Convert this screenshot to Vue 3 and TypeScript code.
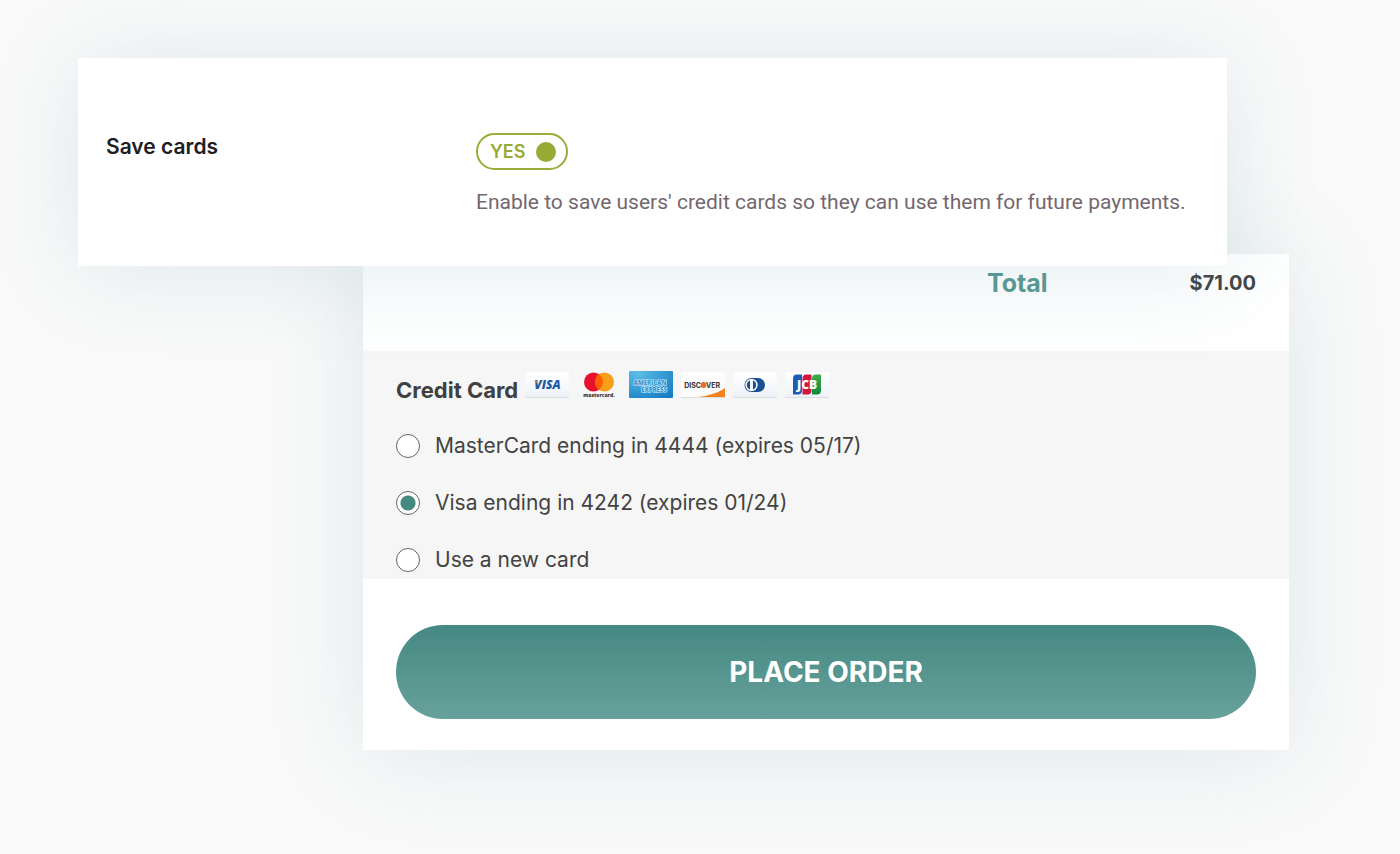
<script setup lang="ts">
import { ref } from 'vue'

interface PaymentOption {
  id: string
  label: string
}

const saveCards = ref(true)
const selected = ref('visa')

const options: PaymentOption[] = [
  { id: 'mastercard', label: 'MasterCard ending in 4444 (expires 05/17)' },
  { id: 'visa', label: 'Visa ending in 4242 (expires 01/24)' },
  { id: 'new', label: 'Use a new card' },
]
</script>

<template>
  <main class="stage">
    <section class="settings">
      <label class="settings-label" for="save-cards">Save cards</label>
      <div class="settings-field">
        <button
          id="save-cards"
          class="toggle"
          :class="{ off: !saveCards }"
          type="button"
          role="switch"
          :aria-checked="saveCards"
          aria-describedby="save-cards-hint"
          @click="saveCards = !saveCards"
        >
          <span>{{ saveCards ? 'YES' : 'NO' }}</span>
          <span class="knob"></span>
        </button>
        <p id="save-cards-hint" class="hint">
          Enable to save users' credit cards so they can use them for future payments.
        </p>
      </div>
    </section>

    <form class="order" @submit.prevent>
      <dl class="total">
        <dt>Total</dt>
        <dd>$71.00</dd>
      </dl>

      <fieldset class="payment">
        <div class="payment-head">
          <h2 id="payment-title">Credit Card</h2>
          <div class="brands">
            <svg class="brand" viewBox="0 0 44 28" role="img" aria-label="Visa">
              <defs>
                <linearGradient id="paper" x1="0" y1="0" x2="0" y2="1">
                  <stop offset="0" stop-color="#ffffff" />
                  <stop offset="1" stop-color="#eef2f8" />
                </linearGradient>
              </defs>
              <rect width="44" height="26" y="1" rx="1" fill="#d9dce1" />
              <rect width="44" height="25" y="1" rx="1" fill="url(#paper)" />
              <text x="22.500" y="18" text-anchor="middle" class="visa">VISA</text>
              <path d="M9 10h3.400l1.300 4.200C12.800 12 11.300 10.800 9 10z" fill="#f0a030" />
            </svg>
            <svg class="brand" viewBox="0 0 44 28" role="img" aria-label="Mastercard">
              <circle cx="16.500" cy="11" r="9.500" fill="#e8112d" />
              <circle cx="27.500" cy="11" r="9.500" fill="#f79e1b" />
              <path d="M22 3.300a9.500 9.500 0 0 1 0 15.400a9.500 9.500 0 0 1 0-15.400z" fill="#ff5f00" />
              <text x="22" y="25.500" text-anchor="middle" class="mc">mastercard.</text>
            </svg>
            <svg class="brand" viewBox="0 0 44 28" role="img" aria-label="American Express">
              <defs>
                <radialGradient id="amex" cx="0.2" cy="0.1" r="1.1">
                  <stop offset="0" stop-color="#5cbde6" />
                  <stop offset="1" stop-color="#167cc4" />
                </radialGradient>
              </defs>
              <rect width="44" height="27" rx="1" fill="url(#amex)" />
              <text x="21" y="13.500" text-anchor="middle" class="amex">AMERICAN</text>
              <text x="25" y="20.500" text-anchor="middle" class="amex">EXPRESS</text>
            </svg>
            <svg class="brand" viewBox="0 0 44 28" role="img" aria-label="Discover">
              <rect width="44" height="26" y="1" rx="1" fill="#dedede" />
              <rect width="44" height="25" y="1" rx="1" fill="#fdfdfd" />
              <path d="M44 17v9H17C28 24.500 37 22 44 17z" fill="#f58220" />
              <text x="20" y="16.500" text-anchor="end" class="discover">DISC</text>
              <circle cx="22.500" cy="14" r="2.900" fill="#f26a21" />
              <text x="25" y="16.500" class="discover">VER</text>
            </svg>
            <svg class="brand" viewBox="0 0 44 28" role="img" aria-label="Diners Club">
              <rect width="44" height="26" y="1" rx="1" fill="#d9dce1" />
              <rect width="44" height="25" y="1" rx="1" fill="url(#paper)" />
              <path d="M18 7h7a7 7 0 0 1 0 14h-7z" fill="#1b4f93" />
              <circle cx="18.500" cy="14" r="7" fill="#1b4f93" />
              <circle cx="18.500" cy="14" r="6.200" fill="#f7f9fc" />
              <path d="M17 9.500a4.800 4.800 0 0 0 0 9zM20 9.500a4.800 4.800 0 0 1 0 9z" fill="#1b4f93" />
            </svg>
            <svg class="brand" viewBox="0 0 44 28" role="img" aria-label="JCB">
              <defs>
                <linearGradient id="jcb-green" x1="0" y1="0" x2="0" y2="1">
                  <stop offset="0" stop-color="#3fae49" />
                  <stop offset="1" stop-color="#0b8a43" />
                </linearGradient>
              </defs>
              <rect width="44" height="26" y="1" rx="1" fill="#d9dce1" />
              <rect width="44" height="25" y="1" rx="1" fill="url(#paper)" />
              <path d="M12 3.500h5v16a4 4 0 0 1-4 4H8v-16a4 4 0 0 1 4-4z" fill="#1f5bb5" />
              <path d="M21.500 3.500h5v16a4 4 0 0 1-4 4h-5v-16a4 4 0 0 1 4-4z" fill="#d3173a" />
              <path d="M31 3.500h5v16a4 4 0 0 1-4 4h-5v-16a4 4 0 0 1 4-4z" fill="url(#jcb-green)" />
              <text x="22" y="17.500" text-anchor="middle" class="jcb">JCB</text>
            </svg>
          </div>
        </div>

        <div class="options" role="radiogroup" aria-labelledby="payment-title">
          <label v-for="option in options" :key="option.id" class="option">
            <input v-model="selected" type="radio" name="payment-card" :value="option.id" />
            <span>{{ option.label }}</span>
          </label>
        </div>
      </fieldset>

      <div class="actions">
        <button class="place-order" type="submit">PLACE ORDER</button>
      </div>
    </form>
  </main>
</template>

<style>
body {
  margin: 0;
  background: #fafafa;
}
</style>

<style scoped>
.stage {
  box-sizing: border-box;
  min-height: 100vh;
  padding: 58px 111px 104px 78px;
  overflow: hidden;
  background: #fafafa;
  color: #434343;
  font-family: Inter, "Liberation Sans", sans-serif;
}

.settings {
  position: relative;
  z-index: 1;
  box-sizing: border-box;
  display: grid;
  grid-template-columns: 370px 1fr;
  margin-right: 62px;
  padding: 75px 28px 50px;
  background: #fff;
  box-shadow: 0 4px 96px rgba(56, 120, 140, 0.15);
}

.settings-label {
  color: #1d2023;
  font-size: 21px;
  font-weight: 600;
  line-height: 28px;
}

.settings-field {
  display: flex;
  flex-direction: column;
  align-items: flex-start;
  gap: 18px;
}

.toggle {
  box-sizing: border-box;
  display: flex;
  align-items: center;
  justify-content: space-between;
  width: 92px;
  height: 37px;
  padding: 0 10px 0 12px;
  border: 2px solid #9aad38;
  border-radius: 19px;
  background: #fff;
  color: #97aa35;
  font-family: inherit;
  font-size: 18px;
  font-weight: 600;
  cursor: pointer;
}

.toggle.off {
  flex-direction: row-reverse;
  border-color: #a5a5a5;
  color: #8c8c8c;
}

.knob {
  width: 20px;
  height: 20px;
  border-radius: 50%;
  background: currentColor;
}

.hint {
  margin: 0;
  color: #74676e;
  font-family: Roboto, "Liberation Sans", sans-serif;
  font-size: 21px;
  line-height: 28px;
}

.order {
  margin: -12px 0 0 285px;
  background: #fff;
  box-shadow: 0 4px 96px rgba(56, 120, 140, 0.15);
}

.total {
  box-sizing: border-box;
  display: flex;
  justify-content: flex-end;
  align-items: center;
  gap: 142px;
  margin: 0;
  padding: 14px 33px 53px;
  line-height: 30px;
  font-weight: 700;
}

.total dt {
  color: #5b9a94;
  font-size: 25px;
}

.total dd {
  margin: 0;
  color: #434649;
  font-size: 20px;
}

.payment {
  min-width: 0;
  margin: 0;
  padding: 20px 33px 4px;
  border: 0;
  background: #f6f6f6;
}

.payment-head {
  display: flex;
  align-items: flex-start;
  gap: 7px;
}

.payment-head h2 {
  margin: 4px 0 0;
  color: #404040;
  font-size: 22px;
  font-weight: 700;
  line-height: 30px;
}

.brands {
  display: flex;
  gap: 8px;
}

.brand {
  display: block;
  width: 44px;
  height: 28px;
}

.brand text {
  font-family: "Open Sans", "Liberation Sans", sans-serif;
  font-weight: 800;
}

.visa {
  fill: #1d5aa6;
  font-size: 12px;
  font-style: italic;
}

.mc {
  fill: #3b3536;
  font-size: 5px;
}

.amex {
  fill: #3c96d0;
  stroke: #d9effa;
  stroke-width: 1px;
  paint-order: stroke;
  font-size: 6px;
}

.brand .discover {
  fill: #33302f;
  font-family: Inter, "Liberation Sans", sans-serif;
  font-size: 7px;
  font-weight: 700;
}

.jcb {
  fill: #fff;
  font-size: 12px;
}

.options {
  display: flex;
  flex-direction: column;
  gap: 27px;
  margin-top: 26px;
}

.option {
  display: flex;
  align-items: center;
  gap: 15px;
  color: #434343;
  font-size: 21px;
  line-height: 30px;
  cursor: pointer;
}

.option input {
  appearance: none;
  box-sizing: border-box;
  flex: none;
  width: 24px;
  height: 24px;
  margin: 0;
  border: 1px solid #666;
  border-radius: 50%;
  background: #fff;
}

.option input:checked {
  background: radial-gradient(circle, #43897f 0 7px, #fff 8px);
}

.actions {
  padding: 46px 33px 31px;
}

.place-order {
  display: block;
  width: 100%;
  height: 94px;
  border: 0;
  border-radius: 47px;
  background: linear-gradient(#458982, #68a19c);
  color: #fff;
  font-family: inherit;
  font-size: 28px;
  font-weight: 700;
  cursor: pointer;
}
</style>
